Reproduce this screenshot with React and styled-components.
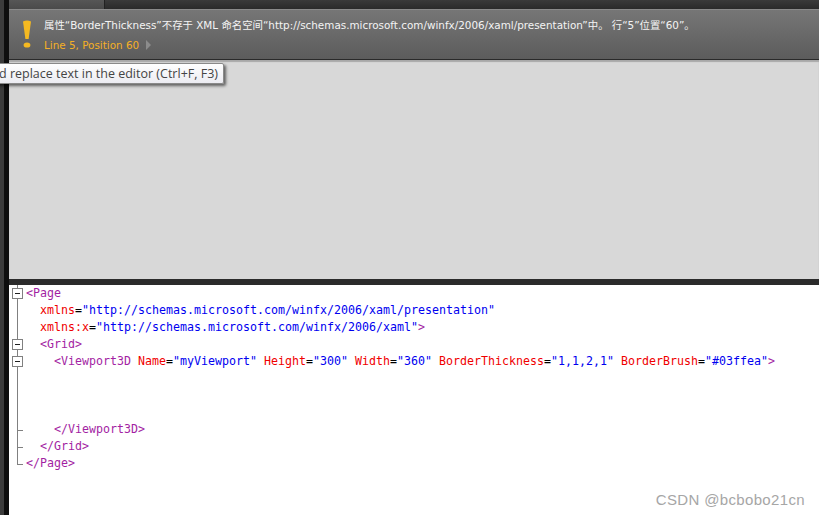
import React from "react";
import styled, { createGlobalStyle } from "styled-components";

const GlobalStyle = createGlobalStyle`
  html, body {
    margin: 0;
    padding: 0;
    height: 100%;
    overflow: hidden;
    background: #fff;
  }
`;

const Page = styled.div`
  position: relative;
  width: 819px;
  height: 515px;
  display: flex;
  overflow: hidden;
  font-family: "Open Sans", "Noto Sans", "Noto Sans CJK SC", sans-serif;
`;

const SideStrip = styled.div`
  width: 4px;
  background: #3c3c3c;
`;

const SideEdge = styled.div`
  width: 5px;
  background: #0e0e0e;
`;

const Main = styled.div`
  flex: 1;
  display: flex;
  flex-direction: column;
`;

const TopTabs = styled.div`
  height: 9px;
  display: flex;
  background: linear-gradient(#3a3a3a, #2a2a2a);
`;

const TopTab = styled.div`
  width: 95px;
  background: linear-gradient(#565656, #4a4a4a);
  border-right: 1px solid #222;
`;

const ErrorBar = styled.div`
  height: 49px;
  display: flex;
  gap: 12px;
  padding: 0 0 0 13px;
  background: linear-gradient(#767676, #5c5c5c);
  border-top: 1px solid #8a8a8a;
  border-bottom: 1px solid #2a2a2a;
`;

const WarningIcon = styled.svg`
  width: 10px;
  height: 30px;
  margin-top: 10px;
`;

const ErrorText = styled.div`
  display: flex;
  flex-direction: column;
  gap: 6px;
  padding-top: 8px;
`;

const ErrorMessage = styled.div`
  font-family: "DejaVu Sans", "Noto Sans CJK SC", sans-serif;
  font-size: 10.4px;
  line-height: 14px;
  color: #f4f4f4;
  white-space: nowrap;
`;

const ErrorPosition = styled.div`
  display: flex;
  align-items: center;
  gap: 7px;
  font-family: "DejaVu Sans", sans-serif;
  font-size: 10.4px;
  line-height: 14px;
  color: #f5b025;
`;

const Chevron = styled.span`
  width: 0;
  height: 0;
  border-left: 5px solid #8c8c8c;
  border-top: 5px solid transparent;
  border-bottom: 5px solid transparent;
`;

const DesignSurface = styled.div`
  height: 219px;
  background: #d8d8d8;
  border-bottom: 6px solid #2b2b2b;
  box-shadow: inset 0 2px 1px rgba(0, 0, 0, 0.22);
`;

const Editor = styled.div`
  flex: 1;
  display: flex;
  background: #fff;
`;

const FoldGutter = styled.div`
  position: relative;
  width: 17px;
  flex-shrink: 0;
`;

const FoldRow = styled.div`
  position: relative;
  height: 17px;
`;

const FoldBox = styled.span`
  position: absolute;
  left: 3px;
  top: 3px;
  width: 9px;
  height: 9px;
  background: #fff;
  border: 1px solid #808080;
  z-index: 1;

  &::after {
    content: "";
    position: absolute;
    left: 2px;
    top: 4px;
    width: 5px;
    height: 1px;
    background: #202020;
  }
`;

const FoldLine = styled.span`
  position: absolute;
  left: 8px;
  top: 0;
  bottom: 0;
  width: 1px;
  background: #808080;
  height: ${(p) => (p.$end ? "9px" : "100%")};
`;

const FoldTick = styled.span`
  position: absolute;
  left: 8px;
  top: 9px;
  width: 6px;
  height: 1px;
  background: #808080;
`;

const Code = styled.div`
  font-family: "DejaVu Sans Mono", "Liberation Mono", monospace;
  font-size: 11.63px;
`;

const CodeLine = styled.div`
  height: 17px;
  line-height: 17px;
  white-space: pre;
  padding-left: ${(p) => (p.$indent || 0) * 14}px;
`;

const Tag = styled.span`
  color: #a31fa3;
`;

const Attr = styled.span`
  color: #f00000;
`;

const Val = styled.span`
  color: #0000f0;
`;

const Tooltip = styled.div`
  position: absolute;
  top: 63px;
  right: 595px;
  height: 19px;
  padding: 0 5px;
  display: flex;
  align-items: center;
  white-space: nowrap;
  font-size: 12.5px;
  color: #444;
  background: linear-gradient(#ffffff, #ececf2);
  border: 1px solid #8a8a8a;
  border-radius: 2px;
  box-shadow: 2px 2px 3px rgba(0, 0, 0, 0.55);
`;

const Watermark = styled.div`
  position: absolute;
  right: 14px;
  bottom: 7px;
  font-family: "Liberation Sans", sans-serif;
  font-size: 15px;
  letter-spacing: 0.35px;
  color: #a6a6a6;
`;

const folds = [
  "box", "line", "line", "box", "box", "line", "line", "line", "tick", "tick", "end",
];

function FoldMark({ kind }) {
  return (
    <FoldRow>
      {kind !== "end" && <FoldLine />}
      {kind === "end" && <FoldLine $end />}
      {(kind === "tick" || kind === "end") && <FoldTick />}
      {kind === "box" && <FoldBox />}
    </FoldRow>
  );
}

function App() {
  return (
    <Page>
      <GlobalStyle />
      <SideStrip />
      <SideEdge />
      <Main>
        <TopTabs>
          <TopTab />
        </TopTabs>
        <ErrorBar>
          <WarningIcon viewBox="0 0 10 30">
            <path d="M1 1.5 Q5 -0.5 9 1.5 L6.6 19 H3.4 Z" fill="#f5b921" />
            <ellipse cx="5" cy="25" rx="3.4" ry="2.6" fill="#f5b921" />
          </WarningIcon>
          <ErrorText>
            <ErrorMessage>
              属性“BorderThickness”不存于 XML 命名空间“http://schemas.microsoft.com/winfx/2006/xaml/presentation”中。 行“5”位置“60”。
            </ErrorMessage>
            <ErrorPosition>
              Line 5, Position 60
              <Chevron />
            </ErrorPosition>
          </ErrorText>
        </ErrorBar>
        <DesignSurface />
        <Editor>
          <FoldGutter>
            {folds.map((kind, i) => (
              <FoldMark key={i} kind={kind} />
            ))}
          </FoldGutter>
          <Code>
            <CodeLine><Tag>&lt;Page</Tag></CodeLine>
            <CodeLine $indent={1}><Attr>xmlns</Attr>=<Val>"http://schemas.microsoft.com/winfx/2006/xaml/presentation"</Val></CodeLine>
            <CodeLine $indent={1}><Attr>xmlns:x</Attr>=<Val>"http://schemas.microsoft.com/winfx/2006/xaml"</Val><Tag>&gt;</Tag></CodeLine>
            <CodeLine $indent={1}><Tag>&lt;Grid&gt;</Tag></CodeLine>
            <CodeLine $indent={2}><Tag>&lt;Viewport3D</Tag> <Attr>Name</Attr>=<Val>"myViewport"</Val> <Attr>Height</Attr>=<Val>"300"</Val> <Attr>Width</Attr>=<Val>"360"</Val> <Attr>BorderThickness</Attr>=<Val>"1,1,2,1"</Val> <Attr>BorderBrush</Attr>=<Val>"#03ffea"</Val><Tag>&gt;</Tag></CodeLine>
            <CodeLine> </CodeLine>
            <CodeLine> </CodeLine>
            <CodeLine> </CodeLine>
            <CodeLine $indent={2}><Tag>&lt;/Viewport3D&gt;</Tag></CodeLine>
            <CodeLine $indent={1}><Tag>&lt;/Grid&gt;</Tag></CodeLine>
            <CodeLine><Tag>&lt;/Page&gt;</Tag></CodeLine>
          </Code>
        </Editor>
      </Main>
      <Tooltip>Find and replace text in the editor (Ctrl+F, F3)</Tooltip>
      <Watermark>CSDN @bcbobo21cn</Watermark>
    </Page>
  );
}

export default App;
